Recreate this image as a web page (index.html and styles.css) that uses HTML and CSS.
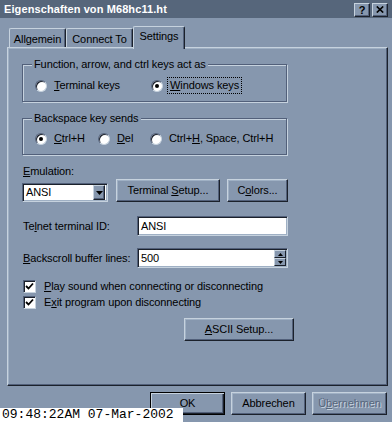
FILE: index.html
```html
<!DOCTYPE html>
<html lang="de">
<head>
<meta charset="utf-8">
<title>Eigenschaften von M68hc11.ht</title>
<link rel="stylesheet" href="styles.css">
</head>
<body>
<div class="titlebar">
  <span class="title">Eigenschaften von M68hc11.ht</span>
  <div class="caption-btns">
    <span class="cbtn help">?</span>
    <span class="cbtn close"><svg width="8" height="7" viewBox="0 0 8 7"><path d="M0.8 0.5L7.2 6.5M7.2 0.5L0.8 6.5" stroke="#000" stroke-width="1.7"/></svg></span>
  </div>
</div>
<div class="tabs">
  <div class="tab t1">Allgemein</div>
  <div class="tab t2">Connect To</div>
  <div class="tab active">Settings</div>
</div>
<div class="panel">
  <div class="group g1">
    <span class="legend">Function, arrow, and ctrl keys act as</span>
    <div class="opts opts2">
      <div class="opt"><span class="rb"></span><span class="lbl"><u>T</u>erminal keys</span></div>
      <div class="opt"><span class="rb on"></span><span class="lbl focus"><u>W</u>indows keys</span></div>
    </div>
  </div>
  <div class="group g2">
    <span class="legend">Backspace key sends</span>
    <div class="opts opts3">
      <div class="opt"><span class="rb on"></span><span class="lbl"><u>C</u>trl+H</span></div>
      <div class="opt"><span class="rb"></span><span class="lbl"><u>D</u>el</span></div>
      <div class="opt"><span class="rb"></span><span class="lbl">Ctrl+<u>H</u>, Space, Ctrl+H</span></div>
    </div>
  </div>
  <div class="emu-row">
    <div class="emu-col">
      <div class="emu-label"><u>E</u>mulation:</div>
      <div class="combo">
        <span class="combo-text">ANSI</span>
        <span class="combo-btn"><svg width="7" height="4" viewBox="0 0 7 4"><path d="M0 0h7L3.5 4z" fill="#000"/></svg></span>
      </div>
    </div>
    <div class="btn b-term"><span>Terminal <u>S</u>etup...</span></div>
    <div class="btn b-colors"><span>C<u>o</u>lors...</span></div>
  </div>
  <div class="form">
    <div class="frow">
      <span class="flabel">Te<u>l</u>net terminal ID:</span>
      <div class="field">ANSI</div>
    </div>
    <div class="frow">
      <span class="flabel"><u>B</u>ackscroll buffer lines:</span>
      <div class="field spin-field">
        <span>500</span>
        <span class="spin">
          <span class="sbtn"><svg width="5" height="3" viewBox="0 0 5 3"><path d="M0 3h5L2.5 0z" fill="#000"/></svg></span>
          <span class="sbtn"><svg width="5" height="3" viewBox="0 0 5 3"><path d="M0 0h5L2.5 3z" fill="#000"/></svg></span>
        </span>
      </div>
    </div>
  </div>
  <div class="checks">
    <div class="chk"><span class="cb"><svg width="9" height="9" viewBox="0 0 9 9"><path d="M1 4l2.5 2.5L8 1.5" stroke="#000" stroke-width="1.8" fill="none"/></svg></span><span><u>P</u>lay sound when connecting or disconnecting</span></div>
    <div class="chk"><span class="cb"><svg width="9" height="9" viewBox="0 0 9 9"><path d="M1 4l2.5 2.5L8 1.5" stroke="#000" stroke-width="1.8" fill="none"/></svg></span><span>E<u>x</u>it program upon disconnecting</span></div>
  </div>
  <div class="btn b-ascii"><span><u>A</u>SCII Setup...</span></div>
</div>
<div class="actions">
  <div class="btn dlg default"><span>OK</span></div>
  <div class="btn dlg"><span>Abbrechen</span></div>
  <div class="btn dlg disabled"><span>Ü<u>b</u>ernehmen</span></div>
</div>
<div class="stamp">09:48:22AM 07-Mar-2002</div>
</body>
</html>
```
FILE: styles.css
```css
* { box-sizing: border-box; }
html, body { margin: 0; padding: 0; }
body {
  width: 392px;
  height: 422px;
  overflow: hidden;
  position: relative;
  background: #8697ae;
  font-family: "Liberation Sans", Arial, sans-serif;
  font-size: 11px;
  line-height: 13px;
  letter-spacing: -0.1px;
  color: #000;
}
u { text-decoration: underline; text-underline-offset: 1px; }

.titlebar {
  height: 18px;
  background: #56667b;
  display: flex;
  align-items: center;
  justify-content: space-between;
  padding: 0 4px 0 4px;
}
.title { color: #fff; font-weight: bold; font-size: 11px; letter-spacing: 0.1px; }
.caption-btns { display: flex; gap: 2px; margin-top: 1px; }
.cbtn {
  width: 16px;
  height: 14px;
  background: #8697ae;
  border: 1px solid;
  border-color: #c6d2de #1b212b #1b212b #c6d2de;
  box-shadow: inset -1px -1px 0 #52607a;
  display: flex;
  align-items: center;
  justify-content: center;
  font-weight: bold;
  font-size: 11px;
  line-height: 12px;
}

.tabs {
  margin-top: 8px;
  height: 21px;
  padding-left: 9px;
  display: flex;
  align-items: flex-end;
}
.tab {
  height: 19px;
  border: 1px solid;
  border-bottom: none;
  border-color: #c6d2de #1b212b #1b212b #c6d2de;
  box-shadow: inset -1px 0 0 #52607a;
  border-radius: 2px 2px 0 0;
  text-align: center;
  padding-top: 4px;
  background: #8697ae;
}
.t1 { width: 57px; }
.t2 { width: 67px; }
.tab.active {
  width: 52px;
  height: 23px;
  margin-bottom: -2px;
  padding-top: 3px;
  position: relative;
  z-index: 1;
}

.panel {
  margin: 0 4px 0 7px;
  height: 339px;
  border: 1px solid;
  border-color: #c6d2de #1b212b #1b212b #c6d2de;
  box-shadow: inset -1px -1px 0 #52607a, inset 1px 1px 0 #9fb0c4;
  padding-left: 14px;
  display: flex;
  flex-direction: column;
  align-items: flex-start;
}

.group {
  position: relative;
  width: 265px;
  border: 1px solid #52607a;
  box-shadow: inset 1px 1px 0 #c6d2de, 1px 1px 0 #c6d2de;
}
.g1 { margin-top: 16px; padding: 12px 0 7px 0; }
.g2 { margin-top: 16px; padding: 11px 0 7px 0; }
.legend {
  position: absolute;
  top: -7px;
  left: 9px;
  padding: 0 2px;
  background: #8697ae;
}
.opts { display: grid; }
.opts2 { grid-template-columns: 116px auto; padding-left: 12px; }
.opts3 { grid-template-columns: 63px 52px auto; padding-left: 12px; }
.opt { display: flex; align-items: center; height: 17px; }
.rb {
  width: 12px;
  height: 12px;
  flex: none;
  border-radius: 50%;
  background: #fff;
  border: 1px solid;
  border-color: #52607a #c6d2de #c6d2de #52607a;
  box-shadow: inset 1px 1px 0 #1b212b;
  margin-right: 4px;
  display: flex;
  align-items: center;
  justify-content: center;
}
.rb.on::after {
  content: "";
  width: 4px;
  height: 4px;
  border-radius: 50%;
  background: #000;
}
.lbl {
  border: 1px dotted transparent;
  padding: 1px 2px;
  line-height: 13px;
}
.lbl.focus { border-color: #000; }

.emu-row {
  margin-top: 10px;
  display: flex;
  align-items: flex-end;
}
.emu-col { width: 86px; }
.emu-label { height: 13px; padding-left: 1px; }
.combo {
  margin-top: 5px;
  height: 19px;
  background: #fff;
  border: 1px solid;
  border-color: #52607a #c6d2de #c6d2de #52607a;
  box-shadow: inset 1px 1px 0 #1b212b, inset -1px -1px 0 #9fb0c4;
  display: flex;
  align-items: center;
  justify-content: space-between;
  padding: 0 2px 0 3px;
}
.combo-btn {
  width: 12px;
  height: 15px;
  background: #8697ae;
  border: 1px solid;
  border-color: #c6d2de #1b212b #1b212b #c6d2de;
  box-shadow: inset -1px -1px 0 #52607a;
  display: flex;
  align-items: center;
  justify-content: center;
}

.btn {
  height: 23px;
  background: #8697ae;
  border: 1px solid;
  border-color: #c6d2de #1b212b #1b212b #c6d2de;
  box-shadow: inset -1px -1px 0 #52607a, inset 1px 1px 0 #9fb0c4;
  display: flex;
  align-items: center;
  justify-content: center;
  flex: none;
}
.b-term { width: 104px; margin-left: 8px; }
.b-colors { width: 61px; margin-left: 7px; }

.form { margin-top: 14px; display: flex; flex-direction: column; gap: 12px; }
.frow { display: grid; grid-template-columns: 114px 151px; align-items: center; padding-left: 1px; }
.field {
  height: 20px;
  background: #fff;
  border: 1px solid;
  border-color: #52607a #c6d2de #c6d2de #52607a;
  box-shadow: inset 1px 1px 0 #1b212b, inset -1px -1px 0 #9fb0c4;
  padding: 0 3px;
  line-height: 18px;
}
.spin-field { display: flex; justify-content: space-between; align-items: center; padding-right: 1px; }
.spin { display: flex; flex-direction: column; }
.sbtn {
  width: 12px;
  height: 8px;
  background: #8697ae;
  border: 1px solid;
  border-color: #c6d2de #1b212b #1b212b #c6d2de;
  display: flex;
  align-items: center;
  justify-content: center;
}

.checks { margin-top: 10px; padding-left: 1px; }
.chk { display: flex; align-items: center; height: 16px; }
.cb {
  width: 13px;
  height: 13px;
  background: #fff;
  border: 1px solid;
  border-color: #52607a #c6d2de #c6d2de #52607a;
  box-shadow: inset 1px 1px 0 #1b212b;
  margin-right: 8px;
  display: flex;
  align-items: center;
  justify-content: center;
}
.b-ascii { width: 110px; margin-top: 8px; margin-left: 162px; }

.actions {
  margin-top: 6px;
  display: flex;
  justify-content: flex-end;
  gap: 6px;
  padding-right: 5px;
}
.dlg { width: 75px; }
.dlg.default {
  border-color: #000;
  box-shadow: inset 1px 1px 0 #c6d2de, inset -1px -1px 0 #1b212b, inset -2px -2px 0 #52607a;
}
.dlg.disabled { color: #56667b; text-shadow: 1px 1px 0 #c6d2de; }

.stamp {
  position: absolute;
  left: 0;
  bottom: 0;
  width: 183px;
  height: 14px;
  background: #fff;
  color: #000;
  font-family: "Liberation Mono", "Courier New", monospace;
  font-size: 13px;
  line-height: 14px;
  letter-spacing: 0;
  padding-left: 2px;
  white-space: nowrap;
}
```
